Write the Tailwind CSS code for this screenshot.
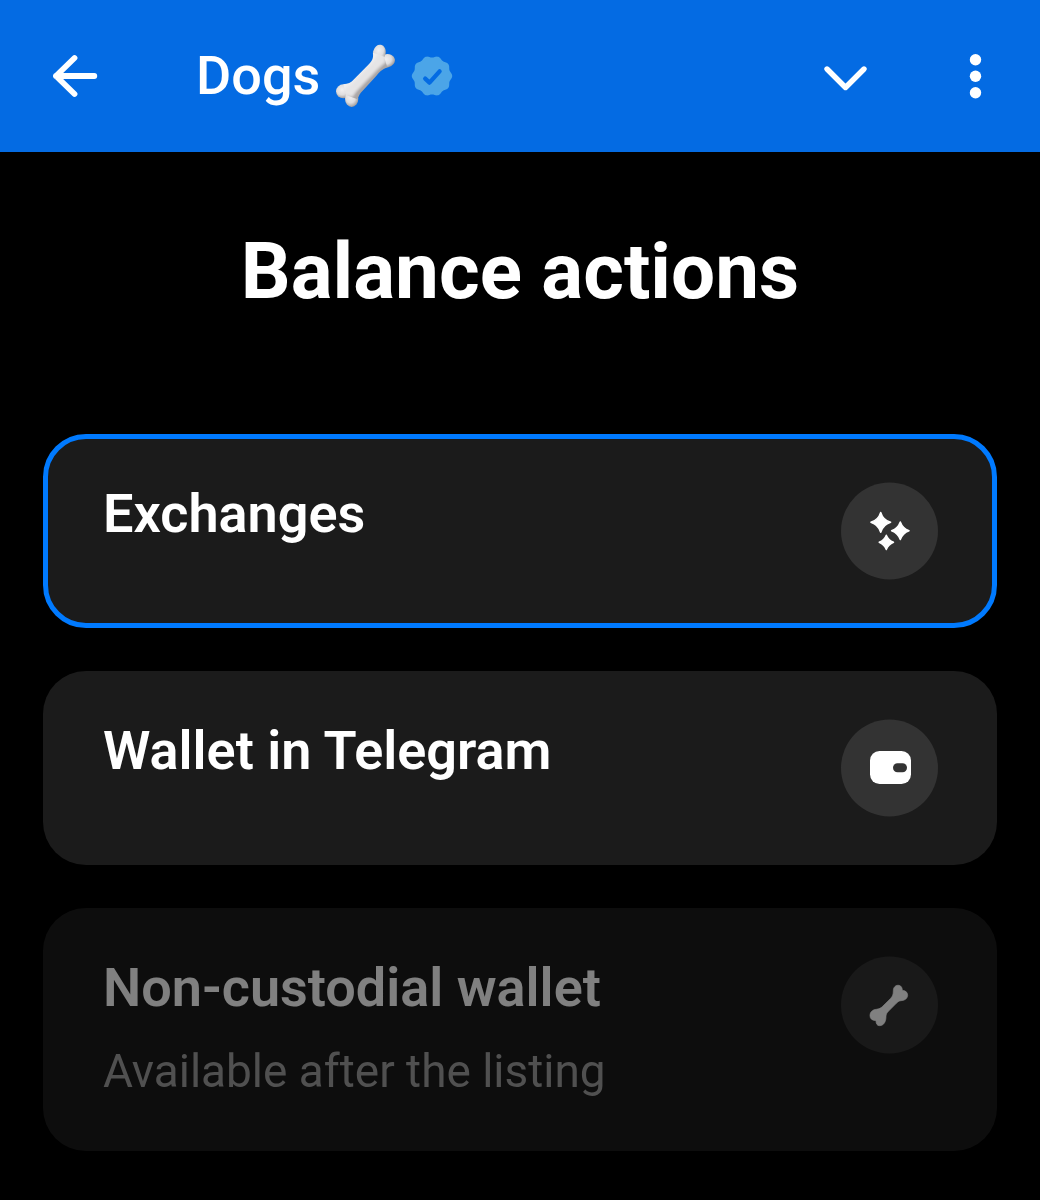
<!DOCTYPE html>
<html lang="en">
<head>
  <meta charset="UTF-8"/>
  <meta name="viewport" content="width=device-width,initial-scale=1"/>
  <title>Dogs</title>
  <script src="https://cdn.jsdelivr.net/npm/@tailwindcss/browser@4"></script>
</head>
<body class="bg-black text-white font-[Roboto,sans-serif] min-h-screen overflow-hidden">
  <!-- Header -->
  <header class="bg-[#046be3] h-[152px] flex items-center pl-[51px] pr-[57px]">
    <button class="w-[48px] h-[48px]">
      <svg class="w-[48px] h-[48px]" viewBox="0 0 48 48" fill="none" stroke="currentColor" stroke-width="5.8" stroke-linecap="round" stroke-linejoin="round">
        <path d="M43.300 24H5M23.500 6L5 24L23.500 42"/>
      </svg>
    </button>
    <h1 class="ml-[97px] text-[54px] leading-[64px] font-medium">Dogs</h1>
    <svg class="ml-[14px] w-[62px] h-[64px]" viewBox="0 0 186 192">
      <defs>
        <linearGradient id="bone" x1="80" y1="80" x2="108" y2="108" gradientUnits="userSpaceOnUse">
          <stop offset="0" stop-color="#efeeef"/>
          <stop offset="0.5" stop-color="#e2e1e2"/>
          <stop offset="1" stop-color="#aaa6a6"/>
        </linearGradient>
        <radialGradient id="knob" cx="0.42" cy="0.38" r="0.62">
          <stop offset="0" stop-color="#f1f0f1"/>
          <stop offset="0.6" stop-color="#dedddf"/>
          <stop offset="1" stop-color="#a29e9e"/>
        </radialGradient>
        <filter id="soft" x="-20%" y="-20%" width="140%" height="140%">
          <feGaussianBlur stdDeviation="4"/>
        </filter>
      </defs>
      <ellipse cx="159" cy="50" rx="24" ry="20" transform="rotate(-12 159 50)" fill="url(#knob)"/>
      <ellipse cx="136" cy="26" rx="19" ry="24" transform="rotate(12 136 26)" fill="url(#knob)"/>
      <ellipse cx="28" cy="142" rx="22" ry="21" fill="url(#knob)"/>
      <ellipse cx="53" cy="164" rx="20" ry="25" fill="url(#knob)"/>
      <path fill="url(#bone)" d="M117 26C119 44 113 51 103 62L60 106C51 116 42 120 28 121L38 154L70 166C75 155 77 149 86 140L126 97C135 86 144 76 160 70L150 38Z"/>
      <path fill="#e6e5e6" filter="url(#soft)" d="M128 31C130 46 126 55 115 67L73 111C62 122 51 129 36 135L38 153L56 160C60 148 67 140 76 131L116 89C127 77 138 65 155 54L149 37Z"/>
    </svg>
    <svg class="ml-[15px] w-[42px] h-[42px]" viewBox="-21 -21 42 42">
      <g id="badge" fill="#4ba5e8"></g>
      <path d="M-6.800 2.600L-2.500 6.600L7.600 -4.600" fill="none" stroke="#046be3" stroke-width="4.300" stroke-linecap="round" stroke-linejoin="round"/>
    </svg>
    <svg class="ml-auto mt-[5px] w-[46px] h-[30px]" viewBox="0 0 46 30" fill="none" stroke="currentColor" stroke-width="5.4" stroke-linecap="round" stroke-linejoin="round">
      <path d="M4 5L22.500 23.500L41 5"/>
    </svg>
    <svg class="ml-[100px] w-[14px] h-[46px]" viewBox="0 0 14 46" fill="currentColor">
      <circle cx="6.500" cy="6.700" r="5.700"/>
      <circle cx="6.500" cy="23.200" r="5.700"/>
      <circle cx="6.500" cy="39.700" r="5.700"/>
    </svg>
  </header>

  <main class="px-[43px]">
    <h2 class="pt-[72px] text-center text-[78.200px] leading-[95px] font-bold">Balance actions</h2>

    <!-- Actions -->
    <div class="mt-[115px] flex flex-col gap-[43px]">
      <div class="h-[194px] rounded-[43px] bg-[#1b1b1b] border-[5px] border-[#007aff] pl-[55px] pr-[53px] pt-[43px] flex justify-between items-start">
        <h3 class="text-[54px] leading-[64px] font-semibold">Exchanges</h3>
        <svg class="w-[98px] h-[98px]" viewBox="0 0 98 98">
          <circle cx="48.500" cy="49" r="48.500" fill="#333"/>
          <g fill="#fff" stroke="#fff" stroke-width="1.500" stroke-linejoin="round">
            <path d="M39.700 30.400Q42 38 49.600 40.300Q42 42.600 39.700 50.300Q37.400 42.600 29.900 40.300Q37.400 38 39.700 30.400Z"/>
            <path d="M59.300 40Q61.600 46.400 68 48.700Q61.600 51 59.300 57.500Q57 51 50.600 48.700Q57 46.400 59.300 40Z"/>
            <path d="M45.300 53.200Q47.300 58.300 52.500 60.300Q47.300 62.300 45.300 67.600Q43.300 62.300 38.200 60.300Q43.300 58.300 45.300 53.200Z"/>
          </g>
        </svg>
      </div>

      <div class="h-[194px] rounded-[43px] bg-[#1b1b1b] pl-[60px] pr-[58px] pt-[48px] flex justify-between items-start">
        <h3 class="text-[54px] leading-[64px] font-semibold">Wallet in Telegram</h3>
        <svg class="w-[98px] h-[98px]" viewBox="0 0 98 98">
          <circle cx="48.500" cy="49" r="48.500" fill="#333"/>
          <rect x="29" y="32" width="41" height="33" rx="9.500" fill="#fff"/>
          <rect x="52" y="44.300" width="14" height="9" rx="4.500" fill="#333"/>
        </svg>
      </div>

      <div class="h-[243px] rounded-[43px] bg-[#1b1b1b] pl-[60px] pr-[58px] pt-[48px] flex justify-between items-start opacity-50">
        <div>
          <h3 class="text-[54px] leading-[64px] font-semibold">Non-custodial wallet</h3>
          <p class="mt-[21px] text-[45.950px] leading-[60px] text-[#9f9f9f]">Available after the listing</p>
        </div>
        <svg class="w-[98px] h-[98px]" viewBox="0 0 98 98">
          <circle cx="48.500" cy="49" r="48.500" fill="#333"/>
          <path fill="#fff" stroke="#fff" stroke-width="2" transform="scale(.3333) translate(-33 -33)" d="M190 137C190 126 198 120 206 121C214 122 217 129 217 136C228 137 233 143 233 151C232 161 224 167 213 167C206 168 203 171 199 175L176 198C170 204 168 208 168 215C168 230 161 242 149 242C141 242 138 236 138 227C127 227 120 221 120 212C120 201 128 194 139 193C148 192 153 189 158 184L181 161C188 154 190 148 190 137Z"/>
        </svg>
      </div>
    </div>
  </main>

  <script>
    // scalloped outline of the verified badge
    const lobes = 10;
    let d = '';
    for (let i = 0; i <= 180; i++) {
      const a = i * Math.PI / 90;
      const r = 19.300 - 0.900 * Math.cos(lobes * a);
      d += (i ? 'L' : 'M') + (r * Math.sin(a)).toFixed(2) + ' ' + (-r * Math.cos(a)).toFixed(2);
    }
    document.getElementById('badge').innerHTML = `<path d="${d}Z"/>`;
  </script>
</body>
</html>
